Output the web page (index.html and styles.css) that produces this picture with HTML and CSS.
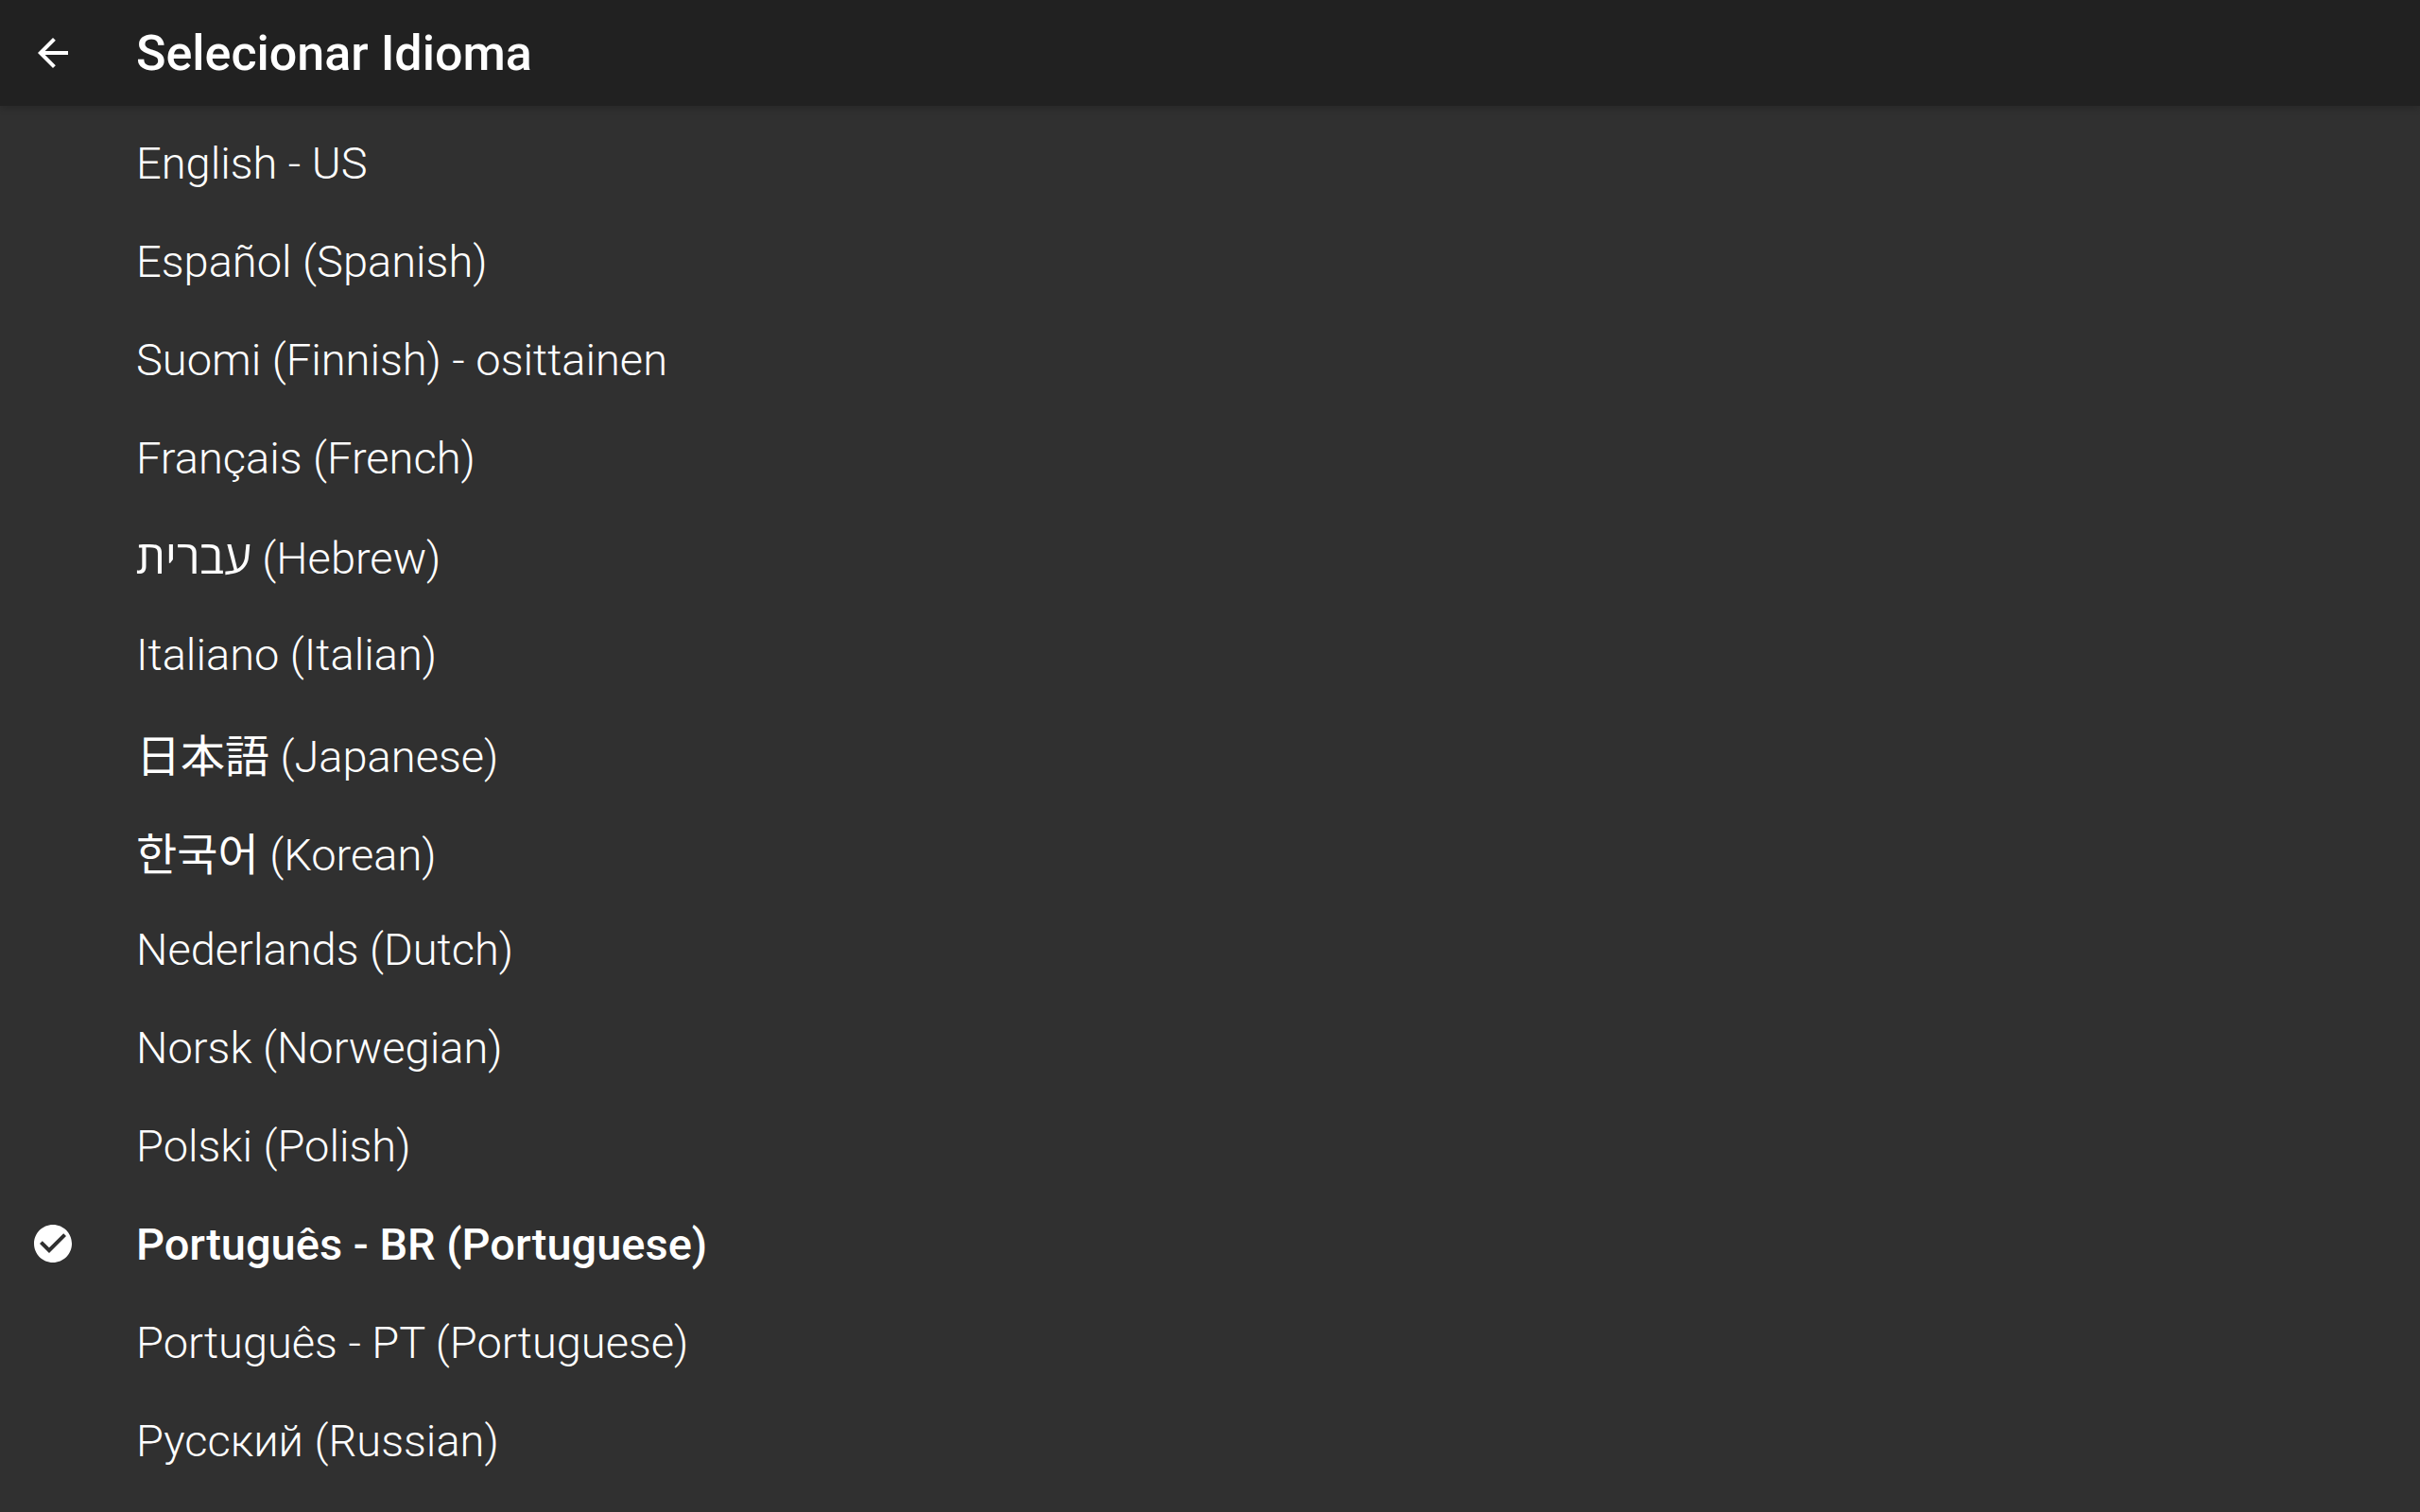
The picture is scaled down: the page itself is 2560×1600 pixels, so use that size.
FILE: index.html
```
<!DOCTYPE html>
<html lang="pt-BR">
  <head>
    <meta charset="utf-8">
    <meta name="viewport" content="width=device-width, initial-scale=1">
    <link rel="stylesheet" href="styles.css">

    <title>Selecionar Idioma</title>
  </head>

  <body>
    <header class="appBar">
      <button class="backButton" type="button" aria-label="Voltar">
        <svg class="icon" viewBox="0 0 24 24">
          <path d="M20 11H7.83l5.59-5.59L12 4l-8 8 8 8 1.41-1.41L7.83 13H20v-2z"/>
        </svg>
      </button>
      <h1>Selecionar Idioma</h1>
    </header>

    <form class="languageList">
      <label class="language">
        <input type="radio" name="language" value="en-US">
        <span class="name">English - US</span>
      </label>
      <label class="language">
        <input type="radio" name="language" value="es">
        <span class="name">Español (Spanish)</span>
      </label>
      <label class="language">
        <input type="radio" name="language" value="fi">
        <span class="name">Suomi (Finnish) - osittainen</span>
      </label>
      <label class="language">
        <input type="radio" name="language" value="fr">
        <span class="name">Français (French)</span>
      </label>
      <label class="language">
        <input type="radio" name="language" value="he">
        <span class="name"><span class="native" lang="he">עברית</span> (Hebrew)</span>
      </label>
      <label class="language">
        <input type="radio" name="language" value="it">
        <span class="name">Italiano (Italian)</span>
      </label>
      <label class="language">
        <input type="radio" name="language" value="ja">
        <span class="name"><span class="native" lang="ja">日本語</span> (Japanese)</span>
      </label>
      <label class="language">
        <input type="radio" name="language" value="ko">
        <span class="name"><span class="native" lang="ko">한국어</span> (Korean)</span>
      </label>
      <label class="language">
        <input type="radio" name="language" value="nl">
        <span class="name">Nederlands (Dutch)</span>
      </label>
      <label class="language">
        <input type="radio" name="language" value="no">
        <span class="name">Norsk (Norwegian)</span>
      </label>
      <label class="language">
        <input type="radio" name="language" value="pl">
        <span class="name">Polski (Polish)</span>
      </label>
      <label class="language">
        <input type="radio" name="language" value="pt-BR" checked>
        <svg class="icon" viewBox="0 0 24 24" aria-hidden="true">
          <path d="M12 2C6.48 2 2 6.48 2 12s4.48 10 10 10 10-4.48 10-10S17.52 2 12 2zm-2 15l-5-5 1.41-1.41L10 14.17l7.59-7.59L19 8l-9 9z"/>
        </svg>
        <span class="name">Português - BR (Portuguese)</span>
      </label>
      <label class="language">
        <input type="radio" name="language" value="pt-PT">
        <span class="name">Português - PT (Portuguese)</span>
      </label>
      <label class="language">
        <input type="radio" name="language" value="ru">
        <span class="name">Русский (Russian)</span>
      </label>
    </form>
  </body>
</html>
```
FILE: styles.css
```
body {
  margin: 0;
  background-color: #303030;
  color: white;
  font-family: Roboto, sans-serif;
}

.appBar {
  display: grid;
  grid-template-columns: 48px 1fr;
  column-gap: 64px;
  align-items: center;
  height: 112px;
  padding: 0 32px;
  background-color: #212121;
  box-shadow: 0 2px 8px rgba(0, 0, 0, 0.2);
}
.appBar h1 {
  margin: 0;
  font-size: 52px;
  font-weight: 500;
}

.backButton {
  padding: 0;
  border: none;
  background: none;
  color: inherit;
  cursor: pointer;
}

.icon {
  display: block;
  width: 48px;
  height: 48px;
  fill: currentColor;
}

.languageList {
  padding: 8px 0;
}

.language {
  display: grid;
  grid-template-columns: 48px 1fr;
  column-gap: 64px;
  align-items: center;
  height: 104px;
  padding: 0 32px;
  cursor: pointer;
}
.language input {
  appearance: none;
  grid-area: 1 / 1;
  width: 48px;
  height: 48px;
  margin: 0;
}
.language .icon {
  grid-area: 1 / 1;
}

.name {
  grid-area: 1 / 2;
  font-size: 47px;
  font-weight: 300;
}
.language input:checked ~ .name {
  font-weight: 500;
}

.native {
  font-weight: 400;
}
.native:lang(he) {
  font-family: "Open Sans", sans-serif;
  font-size: 49px;
}
.native:lang(ja) {
  font-family: "Noto Sans CJK JP", sans-serif;
}
.native:lang(ko) {
  font-family: "Noto Sans CJK KR", sans-serif;
}
```
